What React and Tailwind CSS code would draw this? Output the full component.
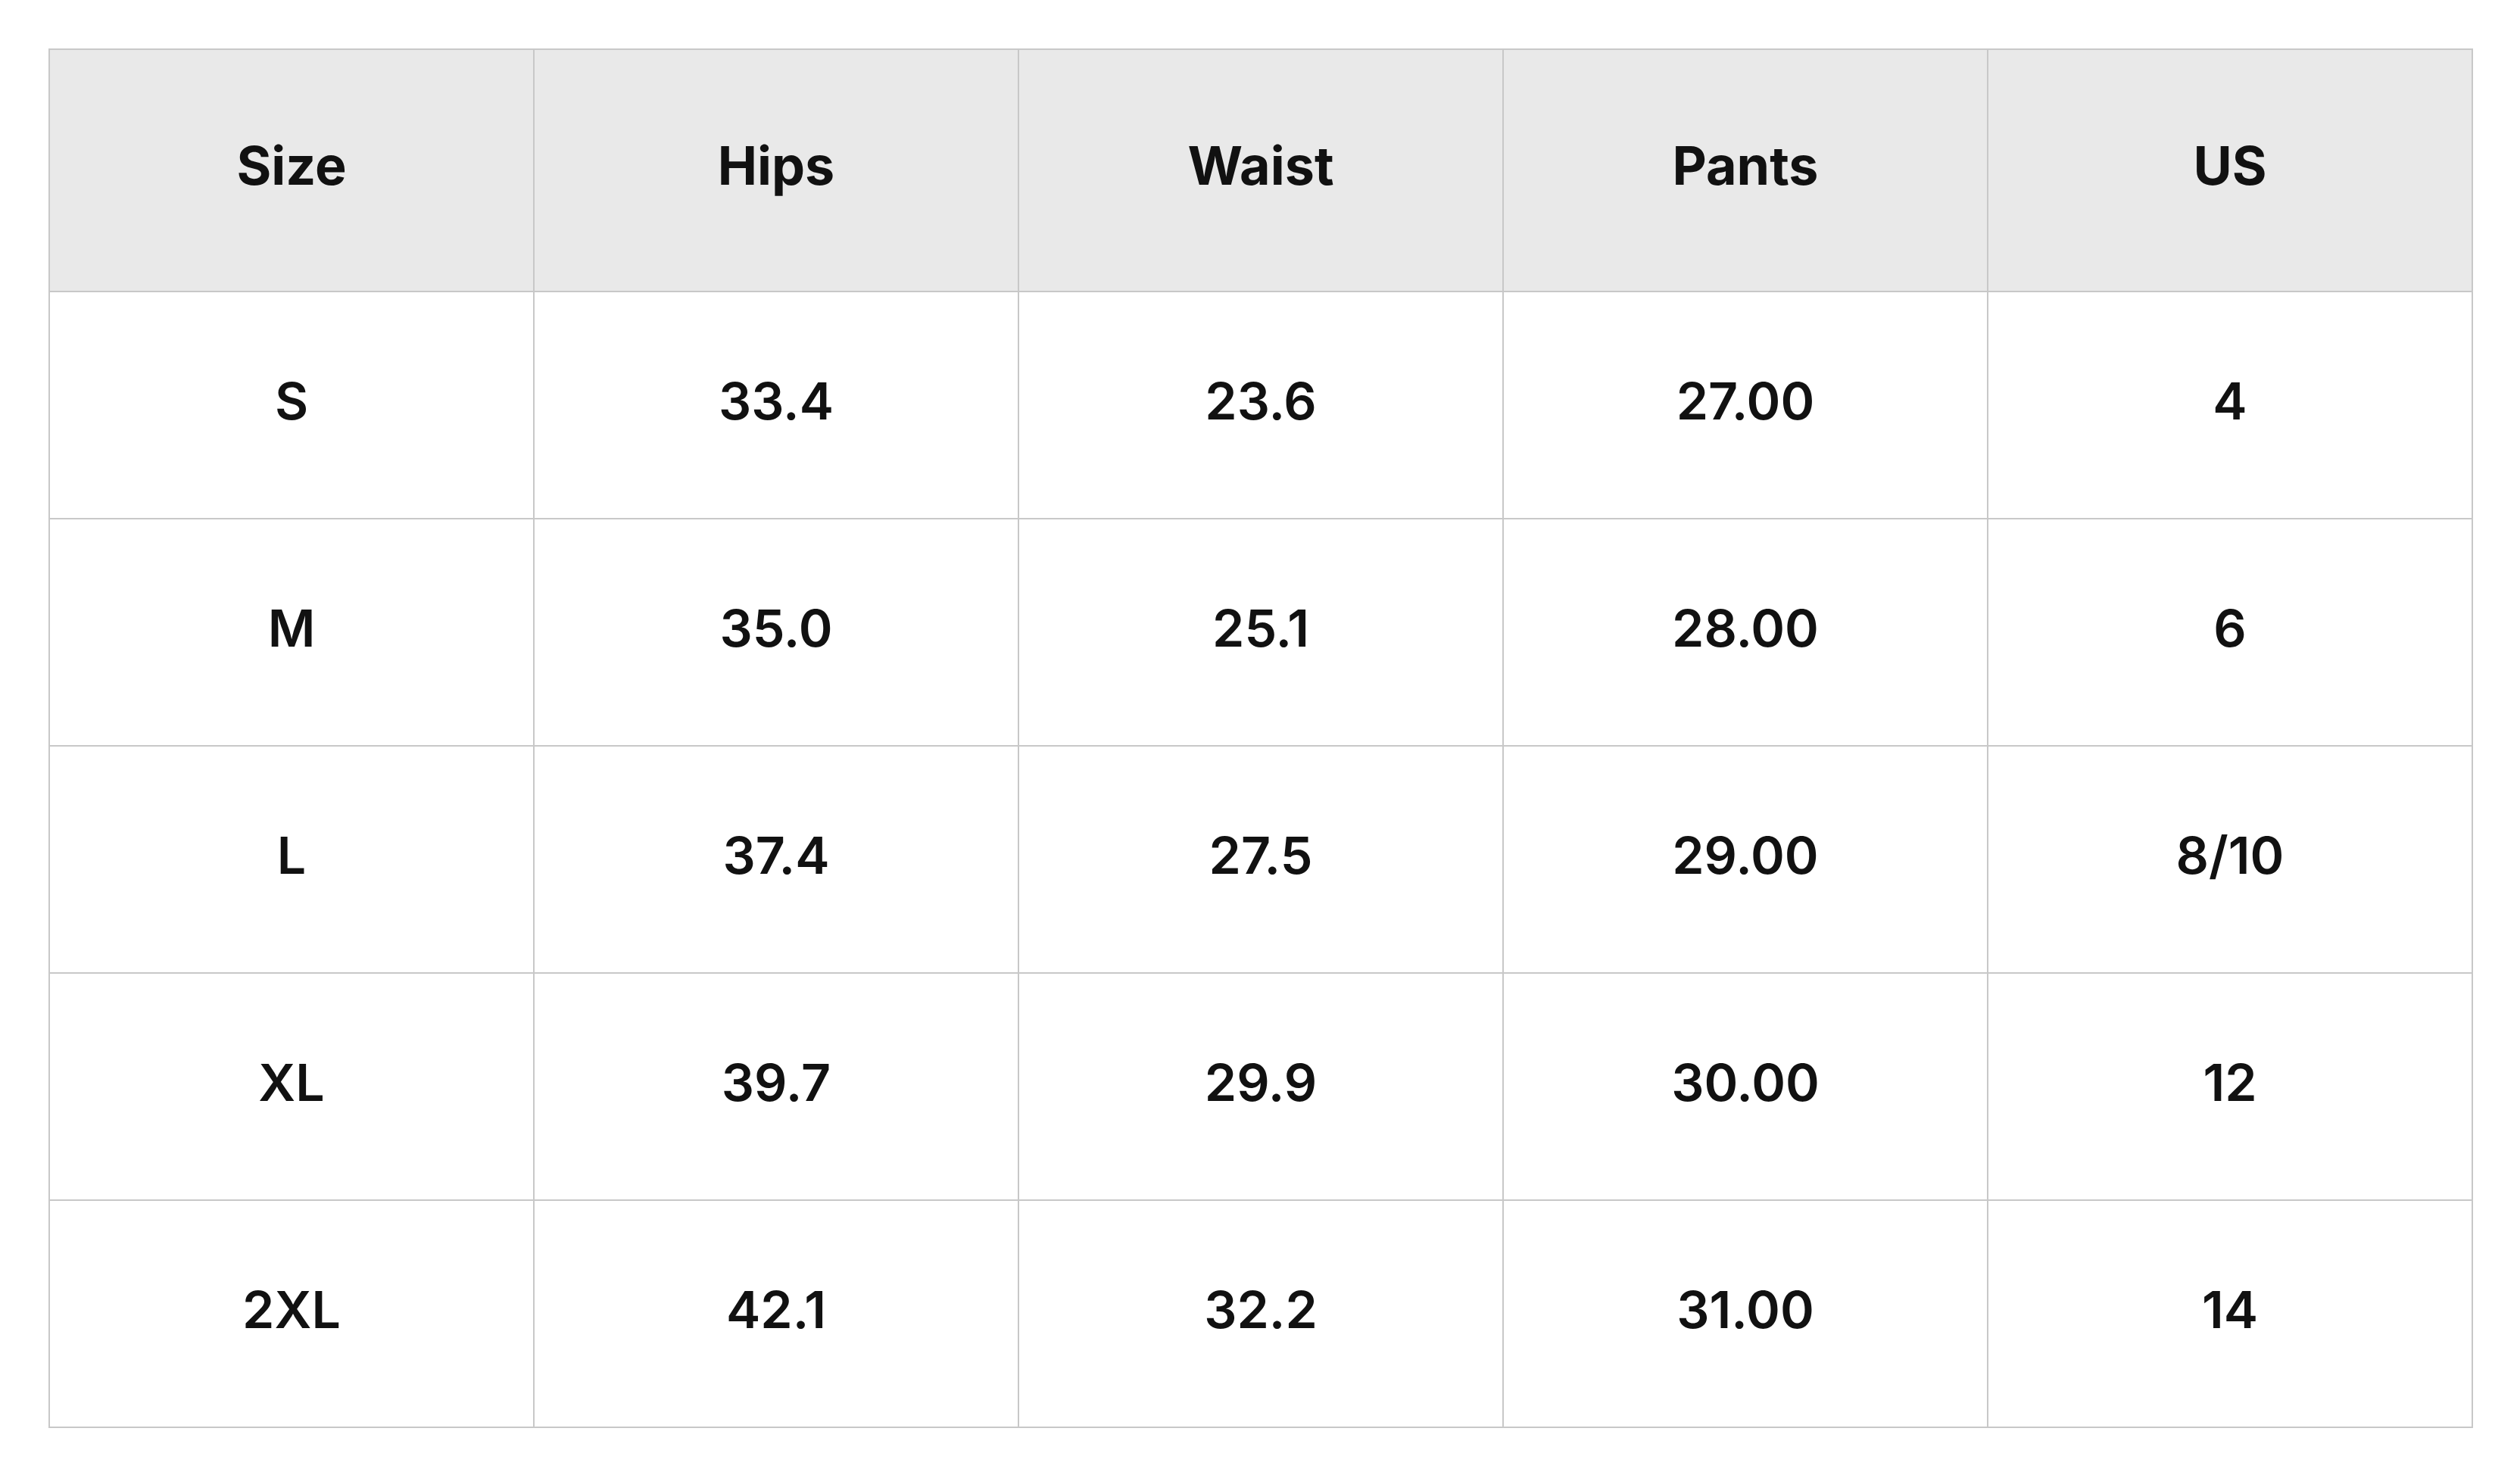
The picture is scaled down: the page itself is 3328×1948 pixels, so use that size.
import React from 'react';

const headers = ['Size', 'Hips', 'Waist', 'Pants', 'US'];

const rows = [
  ['S', '33.4', '23.6', '27.00', '4'],
  ['M', '35.0', '25.1', '28.00', '6'],
  ['L', '37.4', '27.5', '29.00', '8/10'],
  ['XL', '39.7', '29.9', '30.00', '12'],
  ['2XL', '42.1', '32.2', '31.00', '14'],
];

const App = () => {
  return (
    <div className="min-h-screen bg-white pt-16 pl-16 font-['Inter','Liberation_Sans',sans-serif] text-[#111111]">
      <div className="grid w-[3202px] grid-cols-5 border-l-2 border-t-2 border-[#c8c8c8]">
        {headers.map((h) => (
          <div
            key={h}
            className="flex h-[320px] items-center justify-center border-b-2 border-r-2 border-[#c8c8c8] bg-[#e9e9e9] pb-[14px] text-[70px] font-bold"
          >
            {h}
          </div>
        ))}
        {rows.map((row) =>
          row.map((cell, i) => (
            <div
              key={row[0] + i}
              className="flex h-[300px] items-center justify-center border-b-2 border-r-2 border-[#c8c8c8] pb-[12px] text-[68px] font-semibold"
            >
              {cell}
            </div>
          ))
        )}
      </div>
    </div>
  );
};

export default App;
